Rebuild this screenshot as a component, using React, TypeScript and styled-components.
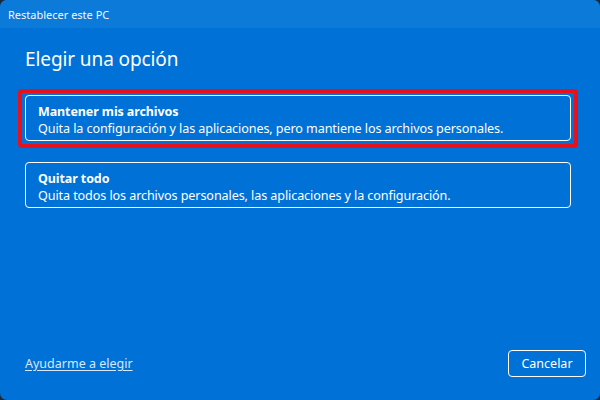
import React from "react";
import styled, { createGlobalStyle } from "styled-components";

const GlobalStyle = createGlobalStyle`
  html, body {
    margin: 0;
    padding: 0;
    background: #1c2a3a;
  }
  * { box-sizing: border-box; }
`;

interface OptionData {
  title: string;
  description: string;
  selected?: boolean;
}

const options: OptionData[] = [
  {
    title: "Mantener mis archivos",
    description:
      "Quita la configuración y las aplicaciones, pero mantiene los archivos personales.",
    selected: true,
  },
  {
    title: "Quitar todo",
    description:
      "Quita todos los archivos personales, las aplicaciones y la configuración.",
  },
];

const App: React.FC = () => {
  return (
    <>
      <GlobalStyle />
      <Window>
        <TitleBar>Restablecer este PC</TitleBar>
        <Body>
          <Heading>Elegir una opción</Heading>
          <OptionList>
            {options.map((o) => (
              <Highlight key={o.title} $active={!!o.selected}>
                <OptionCard>
                  <OptionTitle>{o.title}</OptionTitle>
                  <OptionDesc>{o.description}</OptionDesc>
                </OptionCard>
              </Highlight>
            ))}
          </OptionList>
          <Footer>
            <HelpLink href="#">Ayudarme a elegir</HelpLink>
            <CancelButton>Cancelar</CancelButton>
          </Footer>
        </Body>
      </Window>
    </>
  );
};

export default App;

// Styled components
const Window = styled.div`
  width: 600px;
  height: 400px;
  display: flex;
  flex-direction: column;
  background: #0071d6;
  border-radius: 7px;
  overflow: hidden;
  font-family: "Noto Sans", "Open Sans", sans-serif;
  color: #fff;
`;

const TitleBar = styled.div`
  height: 28px;
  flex-shrink: 0;
  padding: 0 8px;
  display: flex;
  align-items: center;
  font-size: 11px;
  background: #0b7ad8;
  color: #f2f8fe;
`;

const Body = styled.div`
  flex: 1;
  display: flex;
  flex-direction: column;
  padding: 18px 14px 23px 18px;
`;

const Heading = styled.h1`
  margin: 0 0 17px 7px;
  font-size: 19px;
  font-weight: 400;
  line-height: 26px;
  letter-spacing: -0.1px;
`;

const OptionList = styled.div`
  display: flex;
  flex-direction: column;
  gap: 8px;
  width: 560px;
`;

const Highlight = styled.div<{ $active: boolean }>`
  padding: 2px 3px 3px 3px;
  border-radius: 4px;
  border: 4px solid ${(p) => (p.$active ? "#e8101a" : "transparent")};
`;

const OptionCard = styled.div`
  height: 46px;
  border: 1.5px solid #ffffff;
  border-radius: 4px;
  padding: 6px 12px 2px;
  display: flex;
  flex-direction: column;
  justify-content: center;
`;

const OptionTitle = styled.div`
  font-size: 12.5px;
  font-weight: 700;
  line-height: 17px;
  letter-spacing: -0.1px;
`;

const OptionDesc = styled.div`
  font-size: 12.6px;
  line-height: 17px;
  letter-spacing: -0.1px;
`;

const Footer = styled.div`
  margin-top: auto;
  display: flex;
  align-items: center;
  justify-content: space-between;
  padding-left: 7px;
`;

const HelpLink = styled.a`
  font-size: 12.5px;
  color: #d6e8fb;
  text-decoration: underline;
  text-underline-offset: 2px;
`;

const CancelButton = styled.button`
  width: 78px;
  height: 27px;
  border: 1.5px solid #ffffff;
  border-radius: 4px;
  background: transparent;
  color: #fff;
  font-family: inherit;
  font-size: 12.5px;
  cursor: pointer;
`;
